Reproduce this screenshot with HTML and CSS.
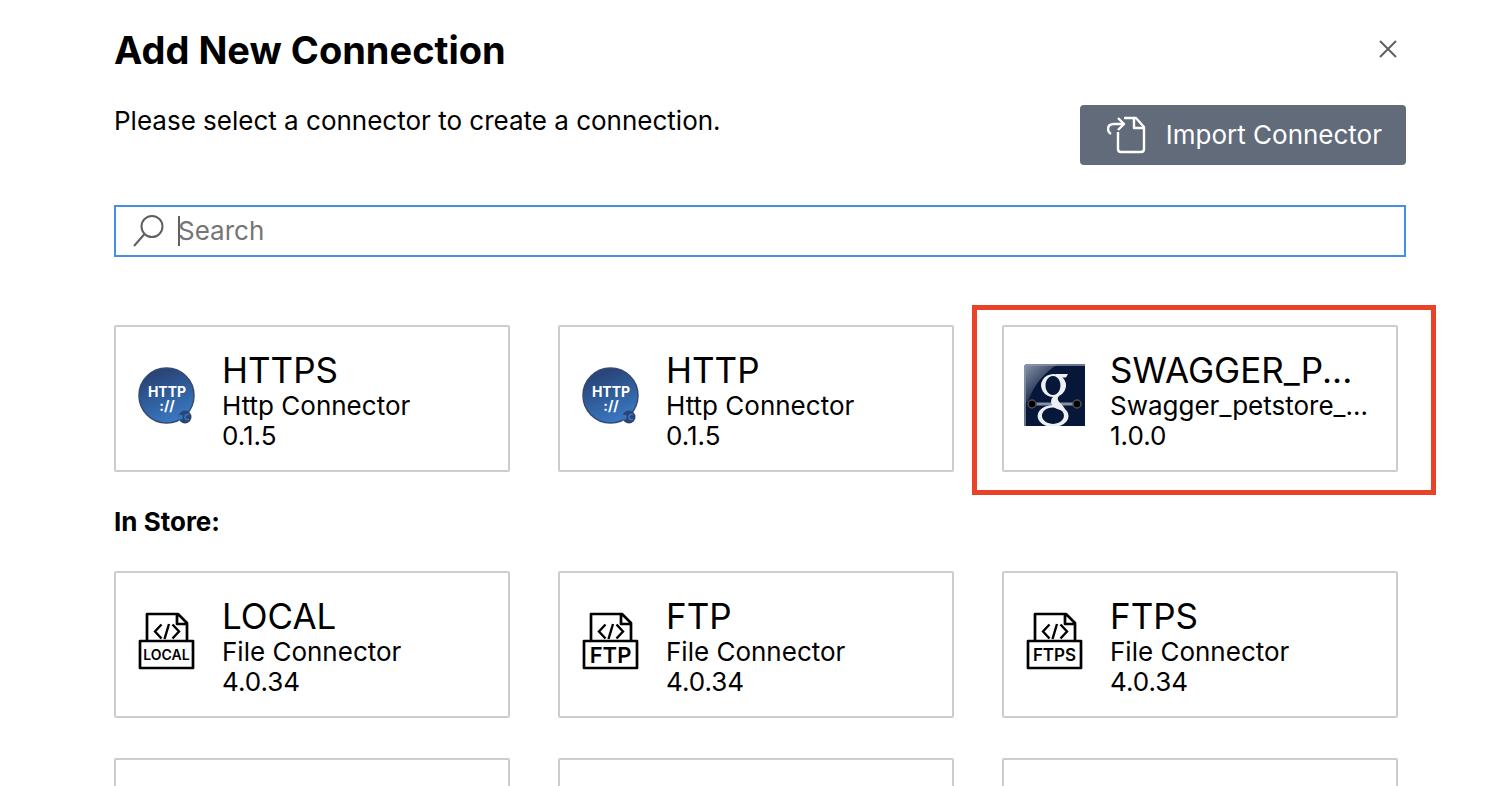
FILE: index.html
```html
<!DOCTYPE html>
<html lang="en">
<head>
<meta charset="utf-8">
<meta name="viewport" content="width=device-width, initial-scale=1">
<title>Add New Connection</title>
<link rel="stylesheet" href="styles.css">
</head>
<body>
<svg class="defs" aria-hidden="true">
  <defs>
    <linearGradient id="http-fill" x1="0.3" y1="0" x2="0.7" y2="1">
      <stop offset="0.1" stop-color="#294579"/>
      <stop offset="1" stop-color="#3a7cc6"/>
    </linearGradient>
    <linearGradient id="gloss" x1="0" y1="0" x2="0.7" y2="0.9">
      <stop offset="0" stop-color="#8c98ae"/>
      <stop offset="0.9" stop-color="#0a1a3d"/>
    </linearGradient>
    <symbol id="http" viewBox="0 0 62 62">
      <circle cx="30.500" cy="31.500" r="27.500" fill="url(#http-fill)" stroke="#344a75" stroke-width="1.500"/>
      <circle cx="49" cy="53" r="6.500" fill="#2b4474"/>
      <path d="M42.500 51q3-.5 4 .5v3.500q-2 1-4 0z" fill="#3975bb"/>
      <path d="M53 50.500h-3q-2 2.500 0 5h3" fill="none" stroke="#3975bb" stroke-width="1.600"/>
      <text x="31" y="33" class="http-mark">HTTP</text>
      <text x="31" y="47" class="http-mark">://</text>
    </symbol>
    <symbol id="file" viewBox="0 0 62 62">
      <path d="M11 31V4h31l9 9v18M41 4v10h10M4 31h53v27H4z" fill="none" stroke="#000" stroke-width="2.700" stroke-linejoin="round"/>
      <path d="M25.500 14.500l-6.500 7 6.500 7M36.500 14.500l6.500 7-6.500 7M33 14l-4.500 15" fill="none" stroke="#000" stroke-width="2.400"/>
    </symbol>
  </defs>
</svg>
<main class="dialog">
  <header class="head">
    <h1 class="title">Add New Connection</h1>
    <button class="close" type="button" aria-label="Close">
      <svg width="18" height="18" viewBox="0 0 18 18"><path d="M1 1l16 16M17 1L1 17" fill="none" stroke="#606060" stroke-width="2"/></svg>
    </button>
  </header>
  <div class="intro">
    <p class="lead">Please select a connector to create a connection.</p>
    <button class="import" type="button">
      <svg width="40" height="38" viewBox="0 0 40 38" fill="none" stroke="#fff" stroke-width="2.400" stroke-linejoin="round">
        <path d="M17 2h12l8 9v22q0 3-3 3H14q-3 0-3-3V16"/>
        <path d="M27 2v10h10"/>
        <path d="M4 18q-3-1.500-3-5q0-5 6-5h9M11 2l6 6-6 6"/>
      </svg>
      Import Connector
    </button>
  </div>
  <label class="search">
    <svg width="32" height="32" viewBox="0 0 32 32" fill="none" stroke="#606060" stroke-width="2"><circle cx="19" cy="11.500" r="10.500"/><path d="M11.500 19L1 31"/></svg>
    <span class="caret"></span>
    <input class="search-input" type="text" placeholder="Search" aria-label="Search">
  </label>

  <section class="grid">
    <button class="card" type="button">
      <svg class="icon" viewBox="0 0 62 62"><use href="#http"/></svg>
      <span class="info"><span class="name">HTTPS</span><span class="line">Http Connector</span><span class="line">0.1.5</span></span>
    </button>
    <button class="card" type="button">
      <svg class="icon" viewBox="0 0 62 62"><use href="#http"/></svg>
      <span class="info"><span class="name">HTTP</span><span class="line">Http Connector</span><span class="line">0.1.5</span></span>
    </button>
    <button class="card marked" type="button">
      <svg class="icon" viewBox="0 0 62 62">
        <path d="M4 0h57v62H0V4q0-4 4-4z" fill="#071739"/>
        <path d="M4 0h30Q13 13 4 37L0 40V4q0-4 4-4z" fill="url(#gloss)"/>
        <path d="M1 62V4q0-3 3-3h57" fill="none" stroke="#8c97aa" stroke-width="1.500"/>
        <path d="M7 40h47" stroke="#8791a3" stroke-width="3"/>
        <circle cx="8" cy="40" r="4" fill="#000" stroke="#4a4d52" stroke-width="1.500"/>
        <circle cx="53" cy="40" r="4" fill="#000" stroke="#4a4d52" stroke-width="1.500"/>
        <path fill="#eceff4" fill-rule="evenodd" d="M29.500 10a12.500 11.500 0 1 0 .1 0zM29 12a7.500 9.500 0 1 1-.1 0z"/>
        <path fill="#eceff4" d="M31 10h13l-2 3.500h-8zM30 32h5q-3 3 1 7q6 5 5 9l-5-2q-9-3-9-8q0-4 3-6z"/>
        <path fill="#eceff4" fill-rule="evenodd" d="M29 41a15.500 11 0 1 0 .1 0zM29 43.500a11 8.200 0 1 1-.1 0z"/>
      </svg>
      <span class="info"><span class="name">SWAGGER_P...</span><span class="line">Swagger_petstore_...</span><span class="line">1.0.0</span></span>
    </button>
  </section>

  <h2 class="subtitle">In Store:</h2>

  <section class="grid">
    <button class="card" type="button">
      <svg class="icon" viewBox="0 0 62 62"><use href="#file"/><text x="30.500" y="50" class="file-mark local">LOCAL</text></svg>
      <span class="info"><span class="name">LOCAL</span><span class="line">File Connector</span><span class="line">4.0.34</span></span>
    </button>
    <button class="card" type="button">
      <svg class="icon" viewBox="0 0 62 62"><use href="#file"/><text x="30.500" y="52.500" class="file-mark ftp">FTP</text></svg>
      <span class="info"><span class="name">FTP</span><span class="line">File Connector</span><span class="line">4.0.34</span></span>
    </button>
    <button class="card" type="button">
      <svg class="icon" viewBox="0 0 62 62"><use href="#file"/><text x="30.500" y="51" class="file-mark ftps">FTPS</text></svg>
      <span class="info"><span class="name">FTPS</span><span class="line">File Connector</span><span class="line">4.0.34</span></span>
    </button>
    <div class="card"></div>
    <div class="card"></div>
    <div class="card"></div>
  </section>
</main>
</body>
</html>
```
FILE: styles.css
```css
* { box-sizing: border-box; }

body {
  margin: 0;
  height: 100vh;
  overflow: hidden;
  background: #fff;
  color: #000;
  font-family: Inter, "Liberation Sans", sans-serif;
  font-size: 26px;
  line-height: 30px;
}

button, input { font: inherit; color: inherit; }
button { cursor: pointer; }
.defs { position: absolute; width: 0; height: 0; }

.dialog {
  height: 100%;
  overflow: hidden;
  padding: 26px 58px 0 114px;
}

.head {
  display: flex;
  align-items: center;
  justify-content: space-between;
  margin-right: 30px;
}

.title {
  margin: 0;
  font-size: 38px;
  line-height: 48px;
  font-weight: 700;
}

.close {
  display: flex;
  margin: 0 9px 2px 0;
  padding: 0;
  border: 0;
  background: none;
}

.intro {
  display: flex;
  align-items: flex-start;
  justify-content: space-between;
  margin: 31px 30px 0 0;
}

.lead { margin: 1px 0 0; }

.import {
  display: flex;
  align-items: center;
  gap: 19px;
  height: 60px;
  padding: 0 24px 0 27px;
  border: 0;
  border-radius: 4px;
  background: #616b7a;
  color: #fff;
}

.search {
  display: flex;
  align-items: center;
  height: 52px;
  margin: 40px 30px 0 0;
  padding-left: 17px;
  border: 2px solid #438fe6;
}

.caret {
  width: 2px;
  height: 30px;
  margin: 0 -2px 0 13px;
  background: #606060;
}

.search-input {
  flex: 1;
  min-width: 0;
  padding: 0;
  border: 0;
  outline: 0;
  background: none;
}

.search-input::placeholder { color: #757575; opacity: 1; }

.grid {
  display: grid;
  grid-template-columns: repeat(3, minmax(0, 1fr));
  gap: 40px 48px;
  margin-right: 38px;
}

.search + .grid { margin-top: 68px; }

.card {
  position: relative;
  display: flex;
  align-items: flex-start;
  gap: 24px;
  min-height: 147px;
  padding: 22px 20px 19px;
  border: 2px solid #cdcdcd;
  border-radius: 2px;
  background: #fff;
  text-align: left;
}

.marked::after {
  content: "";
  position: absolute;
  inset: -22px -40px -25px -32px;
  border: 5px solid #ea4228;
}

.icon {
  flex: none;
  width: 62px;
  height: 62px;
  margin-top: 15px;
}

.info {
  display: flex;
  flex-direction: column;
  min-width: 0;
  white-space: nowrap;
}

.name { font-size: 35px; line-height: 42px; }

.subtitle {
  margin: 35px 0 34px;
  font-size: 26px;
  line-height: 30px;
  font-weight: 700;
}

.http-mark {
  font-size: 14px;
  font-weight: 700;
  text-anchor: middle;
  fill: #fff;
}

.file-mark { font-weight: 600; text-anchor: middle; }
.local { font-size: 14px; }
.ftp { font-size: 22px; }
.ftps { font-size: 17px; }
```
